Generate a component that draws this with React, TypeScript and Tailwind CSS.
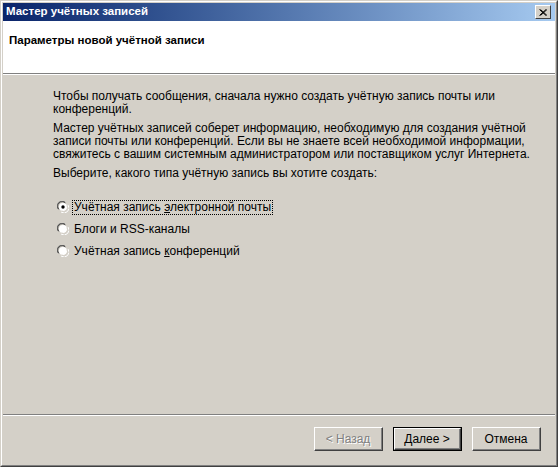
import React from 'react'

const Radio = ({ checked, children, focused }: { checked?: boolean; children: React.ReactNode; focused?: boolean }) => {
  return (
    <div className="flex items-center h-[22px]">
      <svg width="12" height="12" viewBox="0 0 12 12" className="shrink-0">
        <path d="M1 8 A5 5 0 0 1 8 1" fill="none" stroke="#808080" strokeWidth="1" />
        <path d="M2 8.5 A4 4 0 0 1 8.5 2" fill="none" stroke="#404040" strokeWidth="1" />
        <circle cx="6" cy="6" r="4" fill="#ffffff" />
        <path d="M11 4 A5 5 0 0 1 4 11" fill="none" stroke="#ffffff" strokeWidth="1" />
        <path d="M10 4.5 A4 4 0 0 1 4.5 10" fill="none" stroke="#d4d0c8" strokeWidth="1" />
        {checked && <circle cx="6" cy="6" r="1.7" fill="#000000" />}
      </svg>
      <span
        className={
          'ml-[4px] px-[1px] leading-[13px] ' +
          (focused ? 'outline outline-1 outline-dotted outline-black' : '')
        }
      >
        {children}
      </span>
    </div>
  )
}

const Button = ({ children, disabled, isDefault }: { children: React.ReactNode; disabled?: boolean; isDefault?: boolean }) => {
  return (
    <div
      className={
        'w-[69px] h-[24px] flex items-center justify-center bg-[#d4d0c8] ' +
        (isDefault ? 'border border-black' : '')
      }
    >
      <div className="w-full h-full flex items-center justify-center border-t border-l border-t-white border-l-white border-r border-b border-r-[#404040] border-b-[#404040]">
        <div className="w-full h-full flex items-center justify-center border-r border-b border-r-[#808080] border-b-[#808080]">
          <span
            className={disabled ? 'text-[#808080] [text-shadow:1px_1px_0_#ffffff]' : 'text-black'}
          >
            {children}
          </span>
        </div>
      </div>
    </div>
  )
}

export default function App() {
  return (
    <div className="w-[558px] h-[467px] bg-[#d4d0c8] font-['Liberation_Sans',Arial,sans-serif] text-[12px] text-black overflow-hidden">
      <div className="h-full flex flex-col border-t border-l border-t-[#d4d0c8] border-l-[#d4d0c8] border-r border-b border-r-[#404040] border-b-[#404040]">
        <div className="flex-1 flex flex-col border-t border-l border-t-white border-l-white border-r border-b border-r-[#808080] border-b-[#808080] p-[1px]">
          {/* title bar */}
          <div className="h-[18px] flex items-center justify-between pl-[3px] pr-[4px] bg-gradient-to-r from-[#0a246a] to-[#a6caf0]">
            <span className="text-white font-bold text-[11.5px] leading-none">Мастер учётных записей</span>
            <div className="w-[16px] h-[14px] bg-[#d4d0c8] border-t border-l border-t-white border-l-white border-r border-b border-r-[#404040] border-b-[#404040] flex items-center justify-center">
              <svg width="8" height="7" viewBox="0 0 8 7">
                <path d="M0.5 0.5 L7 6.5 M1.5 0.5 L8 6.5 M7 0.5 L0.5 6.5 M8 0.5 L1.5 6.5" stroke="#000" strokeWidth="1" />
              </svg>
            </div>
          </div>

          {/* header */}
          <div className="h-[52px] bg-white pl-[6px] pt-[13px]">
            <div className="font-bold text-[11.5px] leading-[13px]">Параметры новой учётной записи</div>
          </div>
          <div className="h-[1px] bg-[#808080]" />
          <div className="h-[1px] bg-white" />

          {/* body */}
          <div className="flex-1 pl-[50px] pt-[15px] leading-[13px] whitespace-nowrap">
            <p>
              Чтобы получать сообщения, сначала нужно создать учётную запись почты или
              <br />
              конференций.
            </p>
            <p className="mt-[6px]">
              Мастер учётных записей соберет информацию, необходимую для создания учётной
              <br />
              записи почты или конференций. Если вы не знаете всей необходимой информации,
              <br />
              свяжитесь с вашим системным администратором или поставщиком услуг Интернета.
            </p>
            <p className="mt-[6px]">Выберите, какого типа учётную запись вы хотите создать:</p>

            <div className="mt-[16px] pl-[4px] flex flex-col">
              <Radio checked focused>
                Учётная запись <u>э</u>лектронной почты
              </Radio>
              <Radio>Блоги и RSS-каналы</Radio>
              <Radio>
                Учётная запись <u>к</u>онференций
              </Radio>
            </div>
          </div>

          {/* footer */}
          <div className="h-[1px] bg-[#808080]" />
          <div className="h-[1px] bg-white" />
          <div className="h-[48px] flex items-start justify-end pt-[11px] pr-[14px] gap-[10px]">
            <Button disabled>&lt; Назад</Button>
            <Button isDefault>Далее &gt;</Button>
            <Button>Отмена</Button>
          </div>
        </div>
      </div>
    </div>
  )
}
